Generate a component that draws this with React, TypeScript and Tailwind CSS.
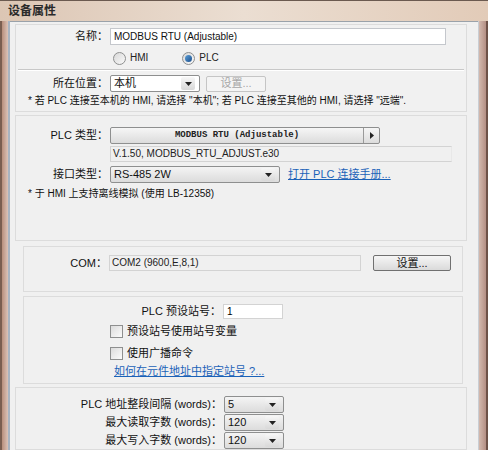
import React from "react";

const font = { fontFamily: '"Liberation Sans", "Noto Sans CJK SC", sans-serif' };

function Arrow() {
  return (
    <svg width="7" height="4" viewBox="0 0 7 4"><path d="M0 0h7L3.5 4z" fill="#222" /></svg>
  );
}

function Select({ w, value, white }: { w: number; value: string; white?: boolean }) {
  return (
    <div
      className={`flex h-[17px] items-center justify-between rounded-[2px] border border-[#8e8f8f] pl-[3px] pr-[4px] ${white ? "bg-white" : "bg-gradient-to-b from-[#f4f4f4] to-[#dcdcdc]"}`}
      style={{ width: w }}
    >
      <span className="text-[11px] leading-none text-[#111]">{value}</span>
      <div className="flex h-[13px] w-[14px] items-center justify-center rounded-[2px] bg-gradient-to-b from-[#f7f7f7] to-[#d8d8d8]">
        <Arrow />
      </div>
    </div>
  );
}

function Label({ w, children }: { w: number; children: React.ReactNode }) {
  return (
    <div className="shrink-0 pr-[2px] text-right text-[11px] leading-none text-[#111]" style={{ width: w }}>
      {children}
    </div>
  );
}

function Check({ label }: { label: string }) {
  return (
    <div className="flex h-[13px] items-center gap-[4px]">
      <div className="h-[13px] w-[13px] border border-[#8e8f8f] bg-gradient-to-br from-[#dcdcdc] to-[#fbfbfb]" />
      <span className="text-[11px] leading-none text-[#111]">{label}</span>
    </div>
  );
}

function Radio({ checked, label }: { checked?: boolean; label: string }) {
  return (
    <div className="flex items-center gap-[4px]">
      <div className="flex h-[13px] w-[13px] items-center justify-center rounded-full border border-[#8e8f8f] bg-gradient-to-br from-[#d8d8d8] to-[#fafafa]">
        {checked && <div className="h-[7px] w-[7px] rounded-full bg-gradient-to-br from-[#5b9fd8] to-[#1d4f8c]" />}
      </div>
      <span className="text-[10px] leading-none text-[#222]">{label}</span>
    </div>
  );
}

function Btn({ w, label, disabled }: { w: number; label: string; disabled?: boolean }) {
  return (
    <div
      className={`flex h-[16px] items-center justify-center rounded-[2px] border ${disabled ? "border-[#c5c5c5] bg-[#f4f4f4] text-[#a6a6a6]" : "border-[#707070] bg-gradient-to-b from-[#f6f6f6] to-[#dadada] text-[#111]"} text-[11px] leading-none`}
      style={{ width: w }}
    >
      {label}
    </div>
  );
}

export default function App() {
  return (
    <div className="flex h-[450px] w-[488px] flex-col overflow-hidden bg-[#f0f0f0]" style={font}>
      {/* title bar */}
      <div className="flex h-[21px] shrink-0 items-center border-t border-[#6b5a50] bg-gradient-to-r from-[#dcc6b4] via-[#ebded2] to-[#e2cbb8] pl-[8px]">
        <span className="text-[12px] font-bold leading-none text-[#2a2a2a]">设备属性</span>
      </div>
      <div className="flex flex-1">
        {/* left frame */}
        <div className="flex w-[10px] shrink-0">
          <div className="w-[2px] bg-[#7a5e50]" />
          <div className="w-[6px] bg-gradient-to-r from-[#b88f7c] to-[#dcc3b8]" />
          <div className="w-[2px] bg-[#a9b4c0]" />
        </div>
        {/* content */}
        <div className="flex flex-1 flex-col border-t border-[#9aa2aa] bg-[#f0f0f0] pl-[5px] pt-[2px]">
          {/* group 1 */}
          <div className="flex h-[88px] w-[452px] shrink-0 flex-col border border-[#dcdcdc] bg-[#f1f1f1]">
            <div className="mt-[3px] flex items-center">
              <Label w={94}>名称：</Label>
              <div className="flex h-[17px] w-[336px] items-center border border-[#c4c7cc] bg-white pl-[3px] text-[10px] leading-none text-[#111]">
                MODBUS RTU (Adjustable)
              </div>
            </div>
            <div className="mt-[6px] flex h-[14px] items-center gap-[34px] pl-[97px]">
              <Radio label="HMI" />
              <Radio checked label="PLC" />
            </div>
            <div className="mx-[2px] mt-[4px] h-[2px] border-t border-b border-[#c8c8c8] border-b-white" />
            <div className="mt-[4px] flex items-center">
              <Label w={94}>所在位置：</Label>
              <Select w={90} value="本机" white />
              <div className="ml-[6px]">
                <Btn w={60} label="设置..." disabled />
              </div>
            </div>
            <div className="mt-[3px] h-[12px] pl-[12px] text-[10px] leading-[12px] text-[#111]">
              * 若 PLC 连接至本机的 HMI, 请选择 "本机"; 若 PLC 连接至其他的 HMI, 请选择 "远端".
            </div>
          </div>
          {/* group 2 */}
          <div className="mt-[3px] flex h-[126px] w-[452px] shrink-0 flex-col border border-[#dcdcdc]">
            <div className="mt-[11px] flex items-center">
              <Label w={94}>PLC 类型：</Label>
              <div className="flex h-[17px] w-[270px] items-center rounded-[2px] border border-[#8e8f8f] bg-gradient-to-b from-[#f6f6f6] to-[#dcdcdc]">
                <span className="flex-1 text-center text-[9px] font-bold leading-none text-[#222]" style={{ fontFamily: '"Liberation Mono", monospace' }}>
                  MODBUS RTU (Adjustable)
                </span>
                <div className="flex h-full w-[16px] items-center justify-center border-l border-[#9a9a9a]">
                  <svg width="4" height="7" viewBox="0 0 4 7"><path d="M0 0v7l4-3.5z" fill="#222" /></svg>
                </div>
              </div>
            </div>
            <div className="mt-[2px] flex">
              <div className="w-[94px]" />
              <div className="flex h-[16px] w-[342px] items-center border border-[#d3d3d3] border-r-[#e8e8e8] pl-[2px] text-[10px] leading-none text-[#222]">
                V.1.50, MODBUS_RTU_ADJUST.e30
              </div>
            </div>
            <div className="mt-[4px] flex items-center">
              <Label w={94}>接口类型：</Label>
              <Select w={170} value="RS-485 2W" />
              <span className="ml-[8px] text-[11px] leading-none text-[#1b62b8] underline">打开 PLC 连接手册...</span>
            </div>
            <div className="mt-[5px] h-[12px] pl-[12px] text-[10px] leading-[12px] text-[#111]">* 于 HMI 上支持离线模拟 (使用 LB-12358)</div>
          </div>
          {/* group 3 COM */}
          <div className="ml-[8px] mt-[5px] flex h-[46px] w-[440px] shrink-0 items-start border border-[#dcdcdc] pt-[8px]">
            <div className="flex items-center">
              <Label w={85}>COM：</Label>
              <div className="flex h-[16px] w-[252px] items-center border border-[#d3d3d3] pl-[2px] text-[10px] leading-none text-[#222]">
                COM2 (9600,E,8,1)
              </div>
              <div className="ml-[12px]">
                <Btn w={78} label="设置..." />
              </div>
            </div>
          </div>
          {/* group 4 */}
          <div className="ml-[8px] mt-[4px] flex h-[88px] w-[440px] shrink-0 flex-col border border-[#dcdcdc]">
            <div className="mt-[7px] flex items-center">
              <Label w={199}>PLC 预设站号：</Label>
              <div className="flex h-[15px] w-[60px] items-center border border-[#d3d3d3] bg-white pl-[3px] text-[10px] leading-none">1</div>
            </div>
            <div className="mt-[6px] pl-[86px]">
              <Check label="预设站号使用站号变量" />
            </div>
            <div className="mt-[9px] pl-[86px]">
              <Check label="使用广播命令" />
            </div>
            <div className="mt-[6px] h-[11px] pl-[90px] text-[11px] leading-none text-[#1b62b8] underline">如何在元件地址中指定站号 ?...</div>
          </div>
          {/* group 5 */}
          <div className="mt-[3px] flex w-[452px] flex-1 flex-col gap-[1px] border border-[#dcdcdc] pt-[8px]">
            {[
              ["PLC 地址整段间隔 (words)：", "5"],
              ["最大读取字数 (words)：", "120"],
              ["最大写入字数 (words)：", "120"],
            ].map(([l, v]) => (
              <div key={l} className="flex items-center">
                <Label w={208}>{l}</Label>
                <Select w={60} value={v} />
              </div>
            ))}
          </div>
        </div>
        {/* right frame */}
        <div className="flex w-[10px] shrink-0">
          <div className="w-[1px] bg-[#c9ced4]" />
          <div className="w-[7px] bg-gradient-to-r from-[#d3b9ae] to-[#b48f84]" />
          <div className="w-[2px] bg-[#6e5248]" />
        </div>
      </div>
    </div>
  );
}
